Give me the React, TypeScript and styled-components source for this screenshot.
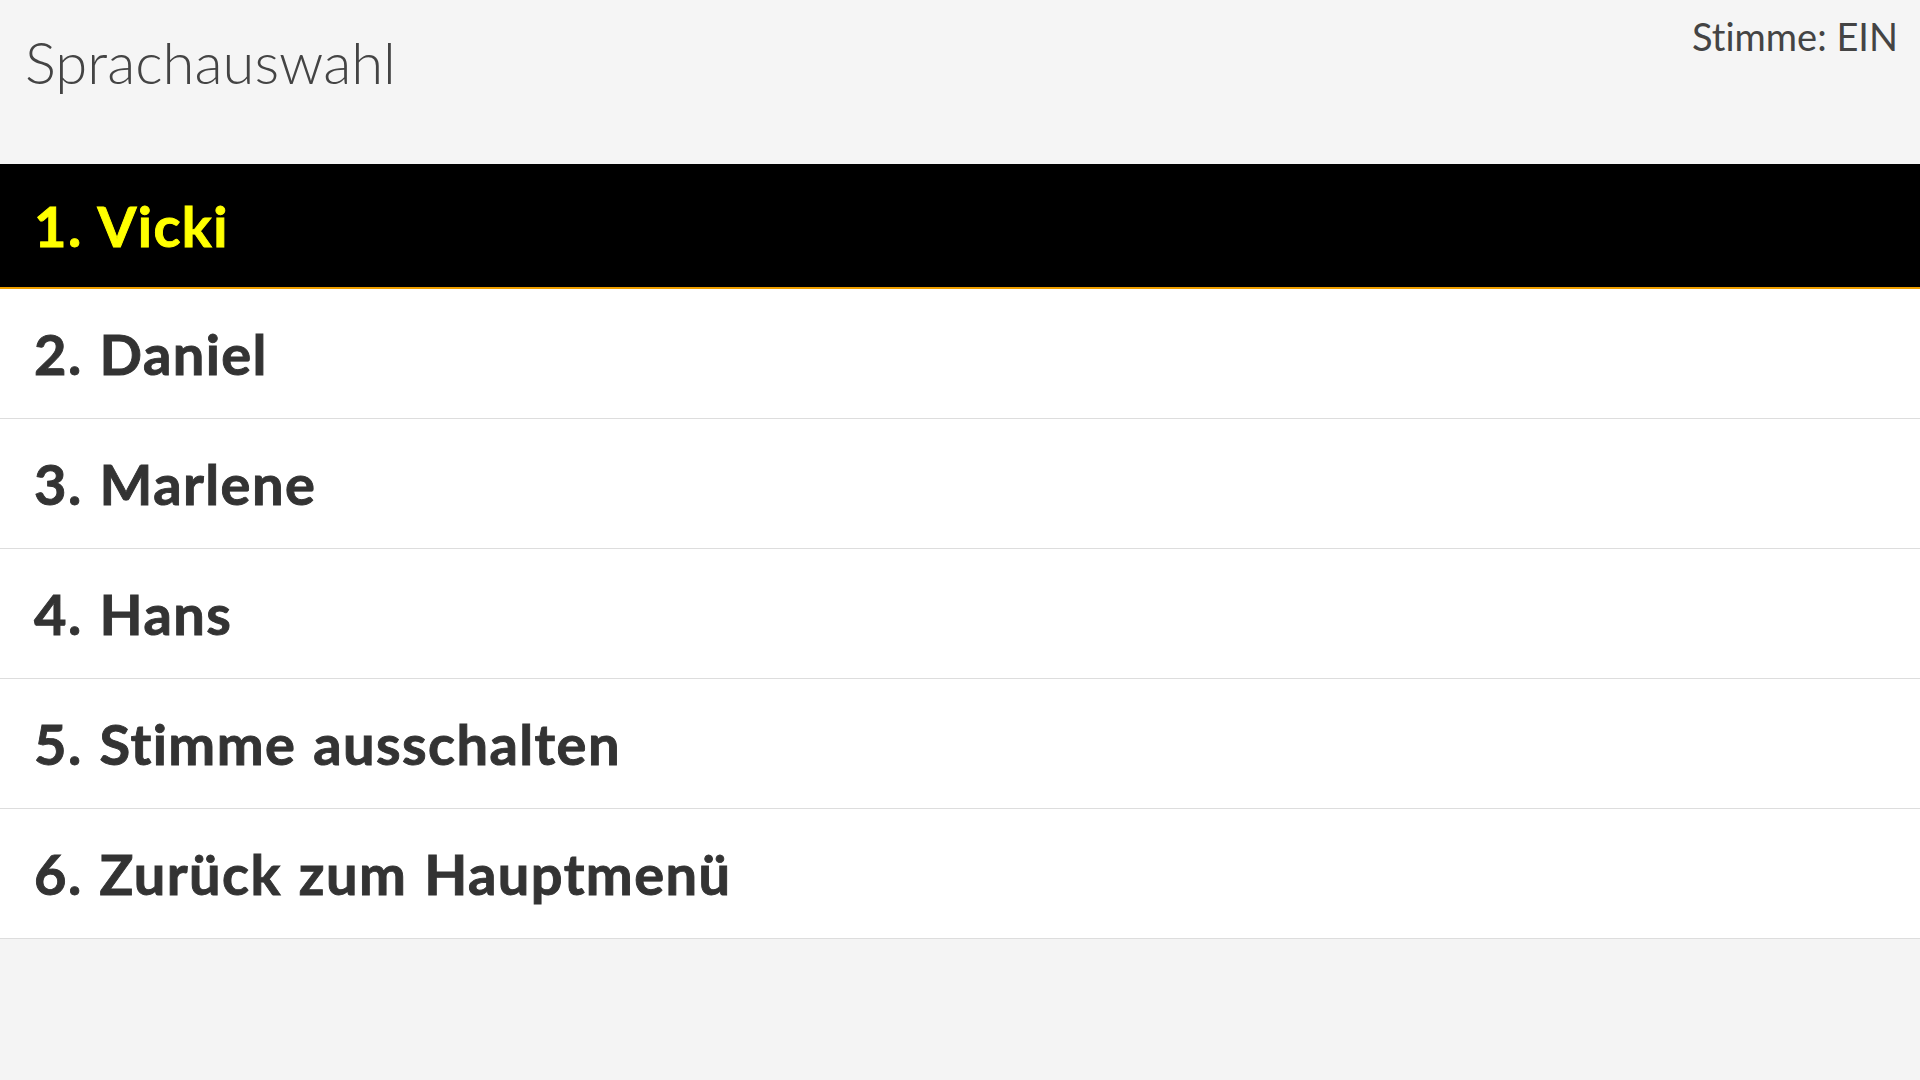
import React from "react";
import styled, { createGlobalStyle } from "styled-components";

const GlobalStyle = createGlobalStyle`
  html, body {
    margin: 0;
    padding: 0;
    background: #f5f5f5;
  }
  body {
    font-family: "Lato", "Open Sans", "Liberation Sans", sans-serif;
    font-variant-ligatures: none;
  }
`;

const Page = styled.div`
  min-height: 100vh;
  background: #f4f4f4;
  display: flex;
  flex-direction: column;
`;

const Header = styled.header`
  height: 164px;
  background: #f5f5f5;
  display: flex;
  justify-content: space-between;
  align-items: flex-start;
  box-sizing: border-box;
`;

const Title = styled.h1`
  margin: 0;
  padding: 21px 0 0 25px;
  font-family: "Lato", "Open Sans", sans-serif;
  font-weight: 300;
  font-size: 58px;
  line-height: 82px;
  color: #444;
`;

const Status = styled.div`
  padding: 10px 22px 0 0;
  font-family: "Lato", "Open Sans", sans-serif;
  font-weight: 400;
  font-size: 38px;
  line-height: 52px;
  color: #444;
`;

const List = styled.ul`
  list-style: none;
  margin: 0;
  padding: 0;
  background: #fff;
`;

const Item = styled.li<{ $selected?: boolean }>`
  box-sizing: border-box;
  height: ${(p) => (p.$selected ? "125px" : "130px")};
  display: flex;
  align-items: center;
  padding-left: 34px;
  background: ${(p) => (p.$selected ? "#000" : "#fff")};
  border-bottom: ${(p) => (p.$selected ? "2px solid #f0a000" : "1px solid #dddddd")};
  color: ${(p) => (p.$selected ? "#ffff00" : "#333")};
  font-family: "Lato", "Open Sans", sans-serif;
  font-weight: 700;
  font-size: 56px;
  line-height: 78px;
  letter-spacing: 1.4px;
  word-spacing: 2px;
  -webkit-text-stroke: 0.9px currentColor;
`;

const items = [
  "1. Vicki",
  "2. Daniel",
  "3. Marlene",
  "4. Hans",
  "5. Stimme ausschalten",
  "6. Zurück zum Hauptmenü",
];

export default function App() {
  return (
    <>
      <GlobalStyle />
      <Page>
        <Header>
          <Title>Sprachauswahl</Title>
          <Status>Stimme: EIN</Status>
        </Header>
        <List>
          {items.map((label, i) => (
            <Item key={label} $selected={i === 0}>
              {label}
            </Item>
          ))}
        </List>
      </Page>
    </>
  );
}
